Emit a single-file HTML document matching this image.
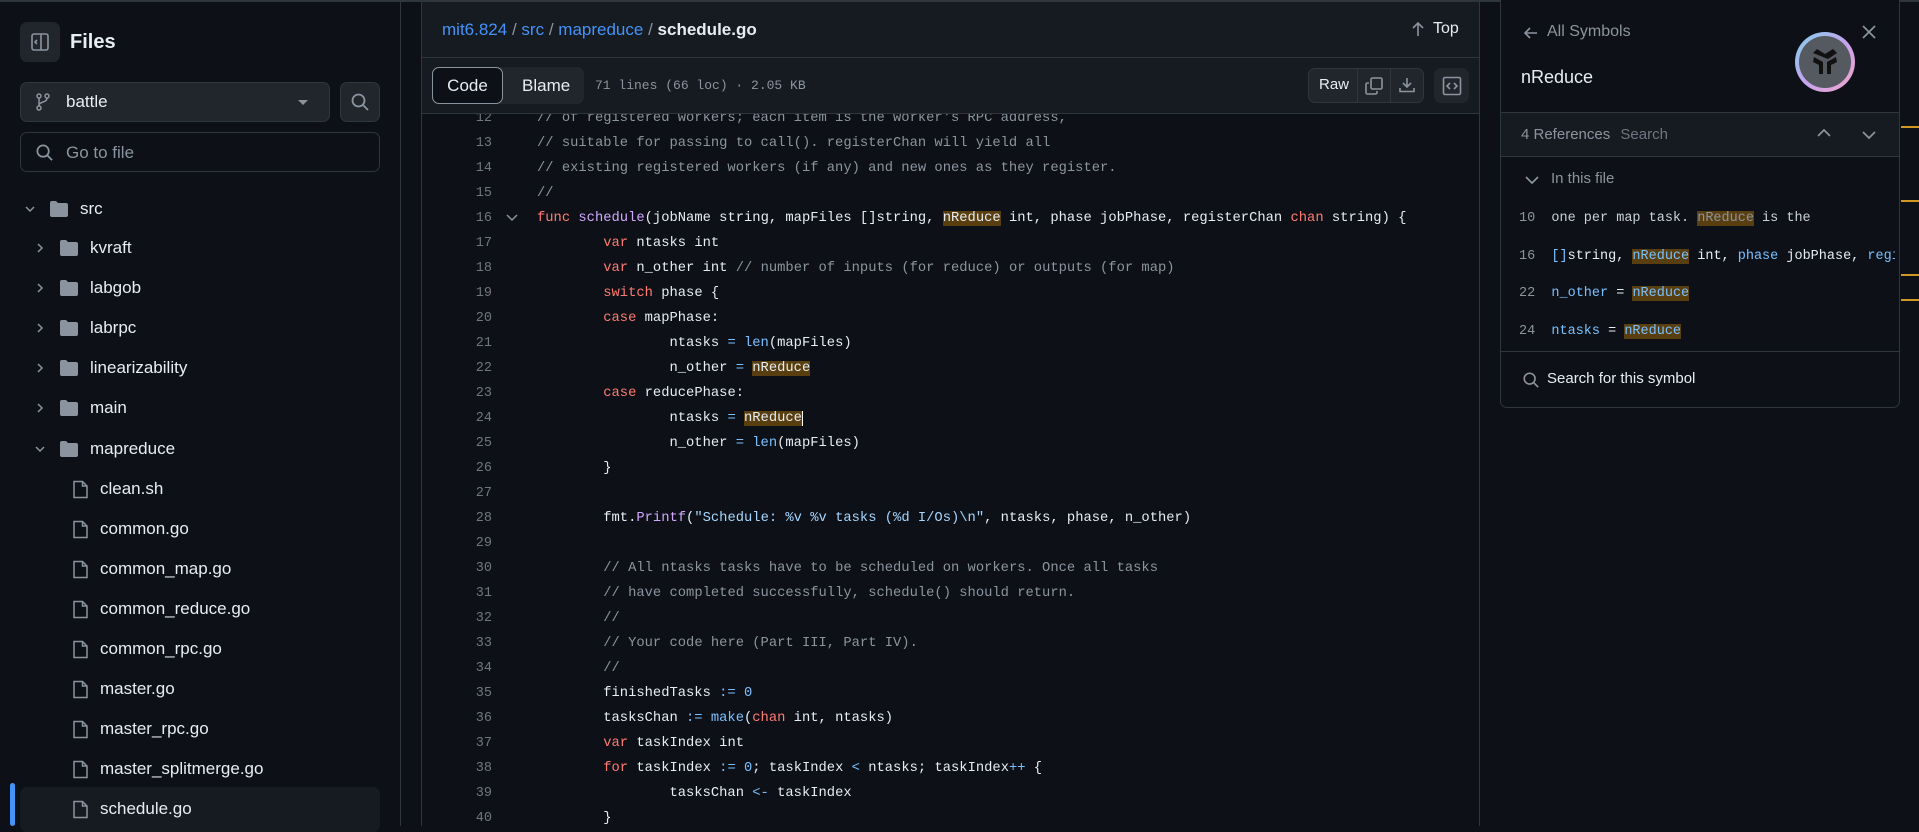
<!DOCTYPE html>
<html><head><meta charset="utf-8"><style>
*{margin:0;padding:0;box-sizing:border-box}
body{width:1919px;height:826px;overflow:hidden;background:#0d1117;font-family:"Liberation Sans",sans-serif;color:#e6edf3;position:relative}
.a{position:absolute}
.b{border:1px solid #30363d}
.mono{font-family:"Liberation Mono",monospace}
.tree{position:absolute;left:0;width:400px;height:40px;font-size:17px;line-height:40px;white-space:nowrap}
.tree span{position:absolute}
.ln{position:absolute;left:430px;width:62px;text-align:right;color:#6e7681;font-size:13.5px;font-family:"Liberation Mono",monospace;height:25px;line-height:25px}
.cl{position:absolute;left:537px;font-size:13.8px;font-family:"Liberation Mono",monospace;white-space:pre;height:25px;line-height:25px;color:#e6edf3}
.k{color:#ff7b72}.f{color:#d2a8ff}.c{color:#8b949e}.n{color:#79c0ff}.s{color:#a5d6ff}
.h{background:#593f10}
</style></head><body>
<div class="a" style="left:0;top:0;width:1919px;height:2px;background:#30363d"></div>
<div class="a" style="left:400px;top:0;width:1px;height:826px;background:#30363d"></div>
<div class="a" style="left:20px;top:22px;width:40px;height:40px;border-radius:7px;background:#21262d"></div>
<svg class="a" style="left:30px;top:32px" width="20" height="20" viewBox="0 0 20 20" fill="none" stroke="#8b949e" stroke-width="1.6"><rect x="2" y="2" width="16" height="16" rx="2"/><line x1="11" y1="2" x2="11" y2="18"/><path d="M7 8l-2 2 2 2"/></svg>
<div class="a" style="left:70px;top:31px;font-size:20px;font-weight:bold">Files</div>
<div class="a b" style="left:20px;top:82px;width:310px;height:40px;border-radius:7px;background:#21262d"></div>
<svg class="a" style="left:36px;top:93px" width="14" height="18" viewBox="0 0 14 18" fill="none" stroke="#8b949e" stroke-width="1.5"><circle cx="3" cy="3" r="2"/><circle cx="11" cy="3" r="2"/><circle cx="3" cy="15" r="2"/><path d="M3 5v8M11 5c0 5-8 3-8 8"/></svg>
<div class="a" style="left:66px;top:92px;font-size:17px">battle</div>
<div class="a" style="left:298px;top:100px;width:0;height:0;border-left:5px solid transparent;border-right:5px solid transparent;border-top:5px solid #8b949e"></div>
<div class="a b" style="left:340px;top:82px;width:40px;height:40px;border-radius:7px;background:#21262d"></div>
<svg class="a" style="left:350px;top:92px" width="20" height="20" viewBox="0 0 20 20" fill="none" stroke="#8b949e" stroke-width="1.8"><circle cx="8.5" cy="8.5" r="6"/><path d="M13 13l5 5"/></svg>
<div class="a b" style="left:20px;top:132px;width:360px;height:40px;border-radius:7px"></div>
<svg class="a" style="left:35px;top:143px" width="19" height="19" viewBox="0 0 20 20" fill="none" stroke="#8b949e" stroke-width="1.8"><circle cx="8.5" cy="8.5" r="6"/><path d="M13 13l5 5"/></svg>
<div class="a" style="left:66px;top:143px;font-size:17px;color:#8b949e">Go to file</div>
<div id="tree"></div>
<div class="a" style="left:20px;top:787px;width:360px;height:45px;border-radius:7px;background:#161b22"></div>
<div class="a" style="left:10px;top:783px;width:5px;height:43px;border-radius:3px;background:#4493f8"></div>
<div id="files"></div>

<div class="a" style="left:421px;top:0;width:1px;height:826px;background:#30363d"></div>
<div class="a" style="left:1479px;top:0;width:1px;height:826px;background:#30363d"></div>
<div class="a" style="left:422px;top:2px;width:1057px;height:111px;background:#161b22"></div>
<div class="a" style="left:422px;top:57px;width:1057px;height:1px;background:#30363d"></div>
<div class="a" style="left:422px;top:113px;width:1057px;height:1px;background:#30363d"></div>
<div class="a" style="left:442px;top:20px;font-size:17px"><span style="color:#4493f8">mit6.824</span> <span style="color:#8b949e">/</span> <span style="color:#4493f8">src</span> <span style="color:#8b949e">/</span> <span style="color:#4493f8">mapreduce</span> <span style="color:#8b949e">/</span> <b>schedule.go</b></div>
<svg class="a" style="left:1411px;top:21px" width="14" height="16" viewBox="0 0 14 16" fill="none" stroke="#8b949e" stroke-width="1.6"><path d="M7 15V2M2 7l5-5 5 5"/></svg>
<div class="a" style="left:1433px;top:20px;font-size:16px;color:#e6edf3">Top</div>
<div class="a" style="left:432px;top:67px;width:152px;height:37px;border-radius:7px;background:#21262d"></div>
<div class="a" style="left:432px;top:67px;width:71px;height:37px;border-radius:7px;background:#0d1117;border:1px solid #8b949e;font-size:17px;text-align:center;line-height:35px">Code</div>
<div class="a" style="left:522px;top:76px;font-size:17px">Blame</div>
<div class="a mono" style="left:595px;top:78px;font-size:13px;color:#8b949e">71 lines (66 loc) · 2.05 KB</div>
<div class="a b" style="left:1308px;top:68px;width:116px;height:35px;border-radius:7px;background:#21262d"></div>
<div class="a" style="left:1357px;top:68px;width:1px;height:35px;background:#30363d"></div>
<div class="a" style="left:1390px;top:68px;width:1px;height:35px;background:#30363d"></div>
<div class="a" style="left:1319px;top:76px;font-size:15px">Raw</div>
<svg class="a" style="left:1364px;top:76px" width="20" height="20" viewBox="0 0 20 20" fill="none" stroke="#8b949e" stroke-width="1.6"><rect x="7" y="2" width="11" height="11" rx="1.5"/><path d="M5 7H3.5A1.5 1.5 0 0 0 2 8.5v8A1.5 1.5 0 0 0 3.5 18h8a1.5 1.5 0 0 0 1.5-1.5V15"/></svg>
<svg class="a" style="left:1398px;top:76px" width="18" height="18" viewBox="0 0 18 18" fill="none" stroke="#8b949e" stroke-width="1.6"><path d="M9 2v9M5 7l4 4 4-4M2 12v3.5h14V12"/></svg>
<div class="a" style="left:1434px;top:68px;width:35px;height:35px;border-radius:7px;background:#21262d"></div>
<svg class="a" style="left:1442px;top:76px" width="20" height="20" viewBox="0 0 20 20" fill="none" stroke="#8b949e" stroke-width="1.6"><rect x="1.5" y="1.5" width="17" height="17" rx="1.5"/><path d="M8 7l-3 3 3 3M12 7l3 3-3 3"/></svg>

<div class="a" style="left:422px;top:114px;width:1057px;height:712px;overflow:hidden">
<div class="a" style="left:-422px;top:-114px;width:1479px;height:826px">
<div id="code"></div>
</div></div>

<div class="a" style="left:1500px;top:0;width:400px;height:408px;border:1px solid #30363d;border-top:none;border-radius:0 0 7px 7px;background:#0d1117;overflow:hidden">
<div class="a" style="left:0;top:112px;width:400px;height:45px;background:#161b22;border-top:1px solid #30363d;border-bottom:1px solid #30363d"></div>
<div class="a" style="left:0;top:351px;width:400px;height:1px;background:#30363d"></div>
</div>
<svg class="a" style="left:1523px;top:25px" width="16" height="16" viewBox="0 0 16 16" fill="none" stroke="#8b949e" stroke-width="1.6"><path d="M14 8H2M7 3L2 8l5 5"/></svg>
<div class="a" style="left:1547px;top:23px;font-size:16px;color:#8b949e">All Symbols</div>
<svg class="a" style="left:1862px;top:25px" width="14" height="14" viewBox="0 0 14 14" stroke="#8b949e" stroke-width="1.7"><path d="M1 1l12 12M13 1L1 13"/></svg>
<div class="a" style="left:1521px;top:67px;font-size:18px">nReduce</div>
<div class="a" style="left:1795px;top:32px;width:60px;height:60px;border-radius:50%;background:linear-gradient(135deg,#7fd3e8,#c5a3f0,#f2a4c8)"></div>
<div class="a" style="left:1799px;top:36px;width:52px;height:52px;border-radius:50%;background:#555a60"></div>
<svg class="a" style="left:1807px;top:44px" width="36" height="36" viewBox="0 0 36 36" fill="#111"><path d="M6 9l4-4 8 5 8-5 4 4-9 6zM16 18l-9-5-1 5 6 3v9h4zM20 18l9-5 1 5-6 3v9h-4z"/></svg>
<div class="a" style="left:1521px;top:126px;font-size:15px;color:#8b949e">4 References <span style="margin-left:6px;color:#6e7681">Search</span></div>
<svg class="a" style="left:1817px;top:128px" width="14" height="10" viewBox="0 0 14 10" fill="none" stroke="#8b949e" stroke-width="1.7"><path d="M1 8l6-6 6 6"/></svg>
<svg class="a" style="left:1862px;top:130px" width="14" height="10" viewBox="0 0 14 10" fill="none" stroke="#8b949e" stroke-width="1.7"><path d="M1 2l6 6 6-6"/></svg>
<svg class="a" style="left:1525px;top:175px" width="14" height="10" viewBox="0 0 14 10" fill="none" stroke="#8b949e" stroke-width="1.7"><path d="M1 2l6 6 6-6"/></svg>
<div class="a" style="left:1551px;top:170px;font-size:15px;color:#8b949e">In this file</div>
<div class="a mono" style="left:1519px;top:210px;width:376px;overflow:hidden;white-space:pre;font-size:13.5px;line-height:18px;color:#8b949e">10  <span style="color:#c9d1d9">one per map task. </span><span class="h">nReduce</span><span style="color:#c9d1d9"> is the</span></div>
<div class="a mono" style="left:1519px;top:248px;width:376px;overflow:hidden;white-space:pre;font-size:13.5px;line-height:18px;color:#8b949e">16  <span class="n">[]</span><span style="color:#e6edf3">string, </span><span class="h n">nReduce</span><span style="color:#e6edf3"> int, </span><span class="n">phase</span><span style="color:#e6edf3"> jobPhase, </span><span class="n">registerChan</span></div>
<div class="a mono" style="left:1519px;top:285px;width:376px;overflow:hidden;white-space:pre;font-size:13.5px;line-height:18px;color:#8b949e">22  <span class="n">n_other</span><span style="color:#e6edf3"> = </span><span class="h n">nReduce</span></div>
<div class="a mono" style="left:1519px;top:323px;width:376px;overflow:hidden;white-space:pre;font-size:13.5px;line-height:18px;color:#8b949e">24  <span class="n">ntasks</span><span style="color:#e6edf3"> = </span><span class="h n">nReduce</span></div>
<svg class="a" style="left:1522px;top:371px" width="18" height="18" viewBox="0 0 20 20" fill="none" stroke="#8b949e" stroke-width="1.8"><circle cx="8.5" cy="8.5" r="6"/><path d="M13 13l5 5"/></svg>
<div class="a" style="left:1547px;top:370px;font-size:15px">Search for this symbol</div>
<div class="a" style="left:1901px;top:126px;width:18px;height:2px;background:#d29922"></div>
<div class="a" style="left:1901px;top:200px;width:18px;height:2px;background:#d29922"></div>
<div class="a" style="left:1901px;top:274px;width:18px;height:2px;background:#d29922"></div>
<div class="a" style="left:1901px;top:299px;width:18px;height:2px;background:#d29922"></div>

<script>
function folder(x){return '<svg style="position:absolute;left:'+x+'px;top:11px" width="20" height="18" viewBox="0 0 20 18" fill="#8b949e"><path d="M1 3a2 2 0 0 1 2-2h4l2 2h8a2 2 0 0 1 2 2v10a2 2 0 0 1-2 2H3a2 2 0 0 1-2-2z"/></svg>';}
function chev(x,open){return '<svg style="position:absolute;left:'+x+'px;top:15px" width="10" height="10" viewBox="0 0 10 10" fill="none" stroke="#8b949e" stroke-width="1.5">'+(open?'<path d="M1 3l4 4 4-4"/>':'<path d="M3 1l4 4-4 4"/>')+'</svg>';}
var tr=[["src",189,0,1],["kvraft",228,1,0],["labgob",268,1,0],["labrpc",308,1,0],["linearizability",348,1,0],["main",388,1,0],["mapreduce",429,1,1]];
var th="";tr.forEach(function(r){var o=r[2]*10;th+='<div class="tree" style="top:'+r[1]+'px">'+chev(25+o,r[3])+folder(49+o)+'<span style="left:'+(80+o)+'px">'+r[0]+'</span></div>';});
document.getElementById("tree").innerHTML=th;
var files=["clean.sh","common.go","common_map.go","common_reduce.go","common_rpc.go","master.go","master_rpc.go","master_splitmerge.go","schedule.go"];
var h="";
files.forEach(function(f,i){var t=469+i*40;
h+='<div class="tree" style="top:'+t+'px"><svg style="position:absolute;left:72px;top:11px" width="17" height="19" viewBox="0 0 17 19" fill="none" stroke="#8b949e" stroke-width="1.5"><path d="M2 1.5h8.5l4.5 4.5v11.5H2z M10.5 1.5V6H15"/></svg><span style="left:100px">'+f+'</span></div>';});
document.getElementById("files").innerHTML=h;
var T="        ",TT=T+T;
var L=[
[12,'<span class="c">// of registered workers; each item is the worker\'s RPC address,</span>'],
[13,'<span class="c">// suitable for passing to call(). registerChan will yield all</span>'],
[14,'<span class="c">// existing registered workers (if any) and new ones as they register.</span>'],
[15,'<span class="c">//</span>'],
[16,'<span class="k">func</span> <span class="f">schedule</span>(jobName string, mapFiles []string, <span class="h">nReduce</span> int, phase jobPhase, registerChan <span class="k">chan</span> string) {'],
[17,T+'<span class="k">var</span> ntasks int'],
[18,T+'<span class="k">var</span> n_other int <span class="c">// number of inputs (for reduce) or outputs (for map)</span>'],
[19,T+'<span class="k">switch</span> phase {'],
[20,T+'<span class="k">case</span> mapPhase:'],
[21,TT+'ntasks <span class="n">=</span> <span class="n">len</span>(mapFiles)'],
[22,TT+'n_other <span class="n">=</span> <span class="h">nReduce</span>'],
[23,T+'<span class="k">case</span> reducePhase:'],
[24,TT+'ntasks <span class="n">=</span> <span class="h" style="border-right:1px solid #fff">nReduce</span>'],
[25,TT+'n_other <span class="n">=</span> <span class="n">len</span>(mapFiles)'],
[26,T+'}'],
[27,''],
[28,T+'fmt.<span class="f">Printf</span>(<span class="s">"Schedule: %v %v tasks (%d I/Os)\\n"</span>, ntasks, phase, n_other)'],
[29,''],
[30,T+'<span class="c">// All ntasks tasks have to be scheduled on workers. Once all tasks</span>'],
[31,T+'<span class="c">// have completed successfully, schedule() should return.</span>'],
[32,T+'<span class="c">//</span>'],
[33,T+'<span class="c">// Your code here (Part III, Part IV).</span>'],
[34,T+'<span class="c">//</span>'],
[35,T+'finishedTasks <span class="n">:=</span> <span class="n">0</span>'],
[36,T+'tasksChan <span class="n">:=</span> <span class="n">make</span>(<span class="k">chan</span> int, ntasks)'],
[37,T+'<span class="k">var</span> taskIndex int'],
[38,T+'<span class="k">for</span> taskIndex <span class="n">:=</span> <span class="n">0</span>; taskIndex <span class="n">&lt;</span> ntasks; taskIndex<span class="n">++</span> {'],
[39,TT+'tasksChan <span class="n">&lt;-</span> taskIndex'],
[40,T+'}']];
var c="";
L.forEach(function(l){var t=106+(l[0]-12)*25;
c+='<div class="ln" style="top:'+t+'px">'+l[0]+'</div><div class="cl" style="top:'+t+'px">'+l[1]+'</div>';});
c+='<svg style="position:absolute;left:506px;top:214px" width="12" height="8" viewBox="0 0 12 8" fill="none" stroke="#8b949e" stroke-width="1.5"><path d="M1 1l5 5 5-5"/></svg>';
document.getElementById("code").innerHTML=c;
</script>
</body></html>
